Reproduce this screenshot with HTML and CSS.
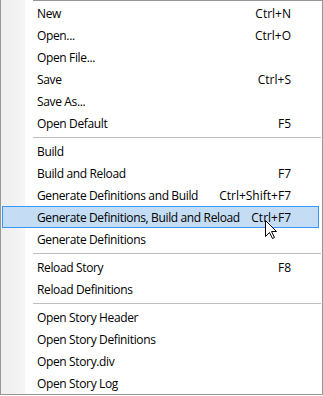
FILE: index.html
```html
<!DOCTYPE html>
<html>
<head>
<meta charset="utf-8">
<link rel="stylesheet" href="styles.css">
</head>
<body>
<div class="menu">
  <div class="item"><span class="label">New</span><span class="key">Ctrl+N</span></div>
  <div class="item"><span class="label">Open...</span><span class="key">Ctrl+O</span></div>
  <div class="item"><span class="label">Open File...</span><span class="key"></span></div>
  <div class="item"><span class="label">Save</span><span class="key">Ctrl+S</span></div>
  <div class="item"><span class="label">Save As...</span><span class="key"></span></div>
  <div class="item"><span class="label">Open Default</span><span class="key">F5</span></div>
  <div class="sep"></div>
  <div class="item"><span class="label">Build</span><span class="key"></span></div>
  <div class="item"><span class="label">Build and Reload</span><span class="key">F7</span></div>
  <div class="item"><span class="label">Generate Definitions and Build</span><span class="key">Ctrl+Shift+F7</span></div>
  <div class="item active"><span class="label">Generate Definitions, Build and Reload</span><span class="key">Ctrl+F7</span>
    <svg class="cursor" width="13" height="20" viewBox="0 0 13 20"><path d="M0.5 0.5 L0.5 16.5 L4.5 12.5 L7.5 18.5 L9.5 17.5 L6.5 11.5 L11.5 11.5 Z" fill="#fff" stroke="#000" stroke-width="1" stroke-linejoin="miter"/></svg>
  </div>
  <div class="item"><span class="label">Generate Definitions</span><span class="key"></span></div>
  <div class="sep"></div>
  <div class="item"><span class="label">Reload Story</span><span class="key">F8</span></div>
  <div class="item"><span class="label">Reload Definitions</span><span class="key"></span></div>
  <div class="sep"></div>
  <div class="item"><span class="label">Open Story Header</span><span class="key"></span></div>
  <div class="item"><span class="label">Open Story Definitions</span><span class="key"></span></div>
  <div class="item"><span class="label">Open Story.div</span><span class="key"></span></div>
  <div class="item"><span class="label">Open Story Log</span><span class="key"></span></div>
</div>
</body>
</html>
```
FILE: styles.css
```css
html, body {
  margin: 0;
  padding: 0;
  background: #ffffff;
}
body {
  font-family: "Open Sans", "Noto Sans", sans-serif;
  font-size: 12px;
  color: #000;
}
.menu {
  position: relative;
  box-sizing: border-box;
  width: 323px;
  padding-top: 2px;
  border-left: 1px solid #979797;
  border-right: 1px solid #979797;
  border-bottom: 1px solid #979797;
  background: linear-gradient(to right, #efefef 0, #f1f1f1 12px, #f6f6f6 24px, #ffffff 24px);
}
.menu::before {
  content: "";
  position: absolute;
  top: 0;
  left: 32px;
  right: 0;
  height: 1px;
  background: #979797;
}
.item {
  position: relative;
  box-sizing: border-box;
  height: 22px;
  margin: 0 3px 0 1px;
  padding: 0 28px 0 35px;
  display: flex;
  align-items: center;
  justify-content: space-between;
  white-space: nowrap;
}
.label {
  letter-spacing: -0.36px;
}
.item.active {
  background: #c4ddf4;
  box-shadow: inset 0 0 0 1px #3399ff;
}
.sep {
  height: 6px;
  margin-left: 32px;
  margin-right: 1px;
  background: linear-gradient(to bottom, transparent 3px, #bdbdbd 3px, #bdbdbd 4px, transparent 4px);
}
.cursor {
  position: absolute;
  left: 263px;
  top: 14px;
}
```
